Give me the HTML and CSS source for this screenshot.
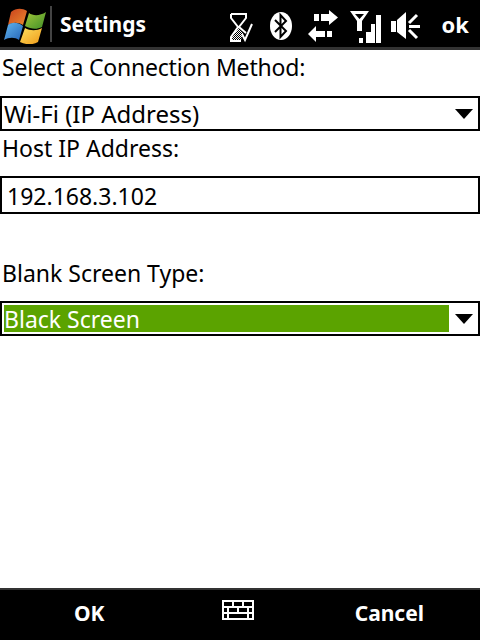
FILE: index.html
```html
<!DOCTYPE html>
<html lang="en">
<head>
    <meta charset="UTF-8">
    <meta name="viewport" content="width=device-width, initial-scale=1.0">
    <title>Settings</title>
    <link rel="stylesheet" href="styles.css">
</head>
<body>
    <div class="screen">
        <div class="titlebar">
            <svg class="start-logo" width="44" height="40" viewBox="4 4 44 40">
                <defs>
                    <linearGradient id="flagRed" x1="0" y1="0" x2="1" y2="1"><stop offset="0" stop-color="#c9401c"/><stop offset="1" stop-color="#ea8a30"/></linearGradient>
                    <linearGradient id="flagGreen" x1="0" y1="0" x2="1" y2="1"><stop offset="0" stop-color="#a3c83a"/><stop offset="1" stop-color="#3f8f28"/></linearGradient>
                    <linearGradient id="flagBlue" x1="0" y1="0" x2="1" y2="1"><stop offset="0" stop-color="#62b6ee"/><stop offset="1" stop-color="#2464b8"/></linearGradient>
                    <linearGradient id="flagYellow" x1="0" y1="0" x2="1" y2="1"><stop offset="0" stop-color="#fde060"/><stop offset="1" stop-color="#f09a18"/></linearGradient>
                </defs>
                <path d="M11 12 C16 8 22 8 27 11 L23 25 C18 22 13 22 8 25 Z" fill="url(#flagRed)"/>
                <path d="M29 13 C33 16 40 16 46 12 L42 27 C36 30 31 29 25 26 Z" fill="url(#flagGreen)"/>
                <path d="M8 25 C12 22 18 22 23 26 L19 40 C15 37 9 37 4 40 Z" fill="url(#flagBlue)"/>
                <path d="M25 28 C30 31 37 31 42 28 L38 42 C33 45 26 45 20 42 Z" fill="url(#flagYellow)"/>
            </svg>
            <span class="title-divider"></span>
            <span class="title">Settings</span>
            <div class="tray">
                <svg class="tray-icon tray-hourglass" width="24" height="30" viewBox="0 0 24 30">
                    <defs>
                        <pattern id="dither" width="2" height="2" patternUnits="userSpaceOnUse">
                            <rect width="1" height="1" fill="#fff"/>
                            <rect x="1" y="1" width="1" height="1" fill="#fff"/>
                        </pattern>
                    </defs>
                    <path d="M1 1 H16 V5 L9 14 L16 20 M1 1 V5 L8 14 L1 24 V28 H11" fill="none" stroke="#fff" stroke-width="2"/>
                    <path d="M8 15 L13 20 L11 27 H2 V24 Z" fill="url(#dither)"/>
                    <path d="M12 21 L15 27 L22 11" fill="none" stroke="#fff" stroke-width="2"/>
                </svg>
                <svg class="tray-icon tray-bluetooth" width="22" height="28" viewBox="0 0 22 28">
                    <ellipse cx="11" cy="14" rx="11" ry="14" fill="#fff"/>
                    <path d="M5 8 L16 19 L10.5 25 V3 L16 9 L5 20" fill="none" stroke="#000" stroke-width="2"/>
                </svg>
                <svg class="tray-icon tray-arrows" width="30" height="32" viewBox="0 0 30 32">
                    <path d="M30 7.500 L21 0 V4 H13 V11 H21 V15 Z M6 4 H11 V11 H6 Z" fill="#fff"/>
                    <path d="M0 24 L8 16 V21 H17 V27 H8 V32 Z M19 21 H24 V27 H19 Z" fill="#fff"/>
                </svg>
                <svg class="tray-icon tray-signal" width="32" height="33" viewBox="0 0 32 33">
                    <path d="M0 1 H19 L12 11 V21 H7 V11 Z M5 4 L9.500 9 L14 4 Z" fill="#fff" fill-rule="evenodd"/>
                    <rect x="9" y="28" width="4" height="5" fill="#fff"/>
                    <rect x="16" y="22" width="5" height="11" fill="#fff"/>
                    <rect x="21" y="14" width="4" height="19" fill="#fff"/>
                    <rect x="26" y="5" width="5" height="28" fill="#fff"/>
                </svg>
                <svg class="tray-icon tray-speaker" width="29" height="30" viewBox="0 0 29 30">
                    <path d="M0 9 H5 V20 H0 Z M6 8 L15 0 V27 L6 20 Z" fill="#fff"/>
                    <path d="M18 11 L26 3 M18 14.500 H29 M18 18 L26 26" fill="none" stroke="#fff" stroke-width="3"/>
                </svg>
                <span class="tray-ok">ok</span>
            </div>
        </div>

        <div class="form">
            <div class="field-label field-label-top">Select a Connection Method:</div>
            <div class="dropdown dropdown-wide">
                <span class="dropdown-value">Wi-Fi (IP Address)</span>
                <span class="dropdown-arrow"></span>
            </div>
            <div class="field-label">Host IP Address:</div>
            <div class="textbox">192.168.3.102</div>
            <div class="field-label field-label-spaced">Blank Screen Type:</div>
            <div class="dropdown">
                <span class="dropdown-value dropdown-selected">Black Screen</span>
                <span class="dropdown-arrow"></span>
            </div>
        </div>

        <div class="softbar">
            <span class="softkey">OK</span>
            <svg class="keyboard" width="32" height="20" viewBox="0 0 32 20">
                <path d="M1 1 H31 V19 H1 Z M1 7 H31 M1 13 H31 M11 1 V7 M21 1 V7 M6 7 V13 M16 7 V13 M26 7 V13 M6 13 V19 M26 13 V19" fill="none" stroke="#fff" stroke-width="2"/>
            </svg>
            <span class="softkey">Cancel</span>
        </div>
    </div>
</body>
</html>
```

FILE: styles.css
```css
body {
    margin: 0;
    padding: 0;
    background: white;
    font-family: "Noto Sans", "DejaVu Sans", sans-serif;
    color: black;
}
.screen {
    width: 480px;
    height: 640px;
    display: flex;
    flex-direction: column;
    overflow: hidden;
}
.titlebar {
    height: 47px;
    background: black;
    border-bottom: 3px solid #333;
    display: flex;
    align-items: center;
    color: white;
}
.start-logo {
    margin-left: 4px;
    flex-shrink: 0;
}
.title-divider {
    width: 2px;
    height: 36px;
    margin-left: 2px;
    background: #444;
}
.title {
    margin-left: 8px;
    font-size: 21px;
    font-weight: bold;
}
.tray {
    margin-left: auto;
    display: flex;
    align-items: center;
    height: 47px;
}
.tray-icon {
    display: block;
}
.tray-hourglass {
    margin-top: 8px;
    margin-right: 16px;
}
.tray-bluetooth {
    margin-top: 5px;
    margin-right: 16px;
}
.tray-arrows {
    margin-top: 4px;
    margin-right: 12px;
}
.tray-signal {
    margin-top: 6px;
    margin-right: 9px;
}
.tray-speaker {
    margin-top: 6px;
}
.tray-ok {
    margin-left: 22px;
    margin-right: 11px;
    font-size: 22px;
    font-weight: bold;
}
.form {
    flex: 1;
}
.field-label {
    height: 45px;
    padding-left: 2px;
    font-size: 23px;
    line-height: 34px;
}
.field-label-top {
    height: 46px;
    letter-spacing: -0.2px;
}
.field-label-spaced {
    margin-top: 42px;
}
.dropdown {
    height: 31px;
    border: 2px solid black;
    display: flex;
    align-items: center;
    justify-content: space-between;
    font-size: 23px;
}
.dropdown-wide {
    font-size: 24px;
}
.dropdown-value {
    height: 27px;
    line-height: 28px;
    margin-left: 2px;
    flex: 1;
}
.dropdown-selected {
    background: #5ba300;
    color: white;
}
.dropdown-arrow {
    width: 0;
    height: 0;
    margin: 0 5px 0 6px;
    border-left: 9px solid transparent;
    border-right: 9px solid transparent;
    border-top: 10px solid black;
    flex-shrink: 0;
}
.textbox {
    height: 34px;
    border: 2px solid black;
    padding-left: 5px;
    font-size: 23px;
    line-height: 37px;
}
.softbar {
    height: 46px;
    background: black;
    border-top: 2px solid #333;
    display: flex;
    align-items: center;
    justify-content: space-between;
    padding: 0 56px 4px 74px;
    color: white;
}
.softkey {
    font-size: 21px;
    font-weight: bold;
}
.keyboard {
    margin-bottom: 6px;
    margin-left: 16px;
}
```
